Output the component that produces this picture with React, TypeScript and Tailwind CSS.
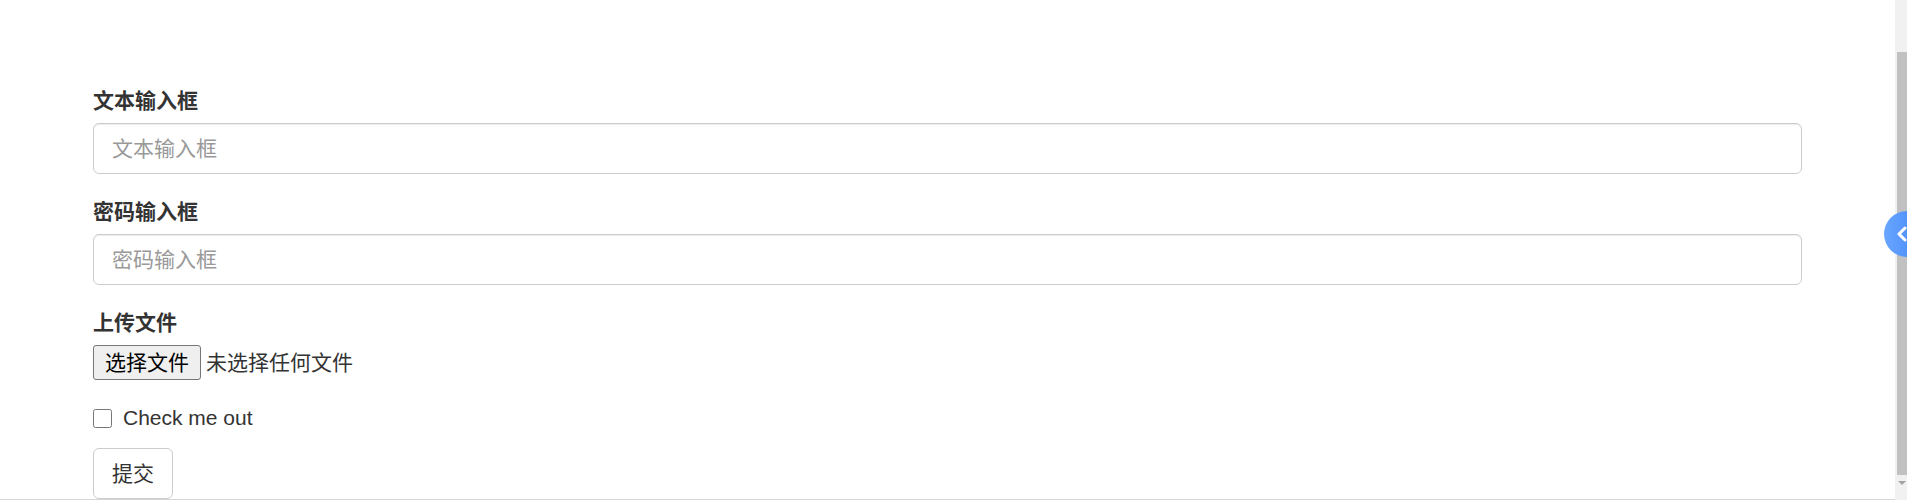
import React, { useState } from 'react';

const font = "font-['Liberation_Sans','Noto_Sans_CJK_SC',sans-serif]";

const App: React.FC = () => {
  const [checked, setChecked] = useState(false);

  return (
    <div className={`flex h-[500px] overflow-hidden bg-white text-[#333] ${font}`}>
      <main className="flex-1 px-[93px] pt-[86px]">
        <form onSubmit={(e) => e.preventDefault()}>
          <div className="mb-[23px]">
            <label className="block h-[30px] mb-[7px] text-[21px] leading-[30px] font-bold">文本输入框</label>
            <input
              type="text"
              placeholder="文本输入框"
              className="block w-full h-[51px] px-[18px] py-[9px] text-[21px] text-[#555] bg-white border border-[#ccc] rounded-[6px] shadow-[inset_0_1px_1px_rgba(0,0,0,0.075)] outline-none placeholder:text-[#999]"
            />
          </div>

          <div className="mb-[23px]">
            <label className="block h-[30px] mb-[7px] text-[21px] leading-[30px] font-bold">密码输入框</label>
            <input
              type="password"
              placeholder="密码输入框"
              className="block w-full h-[51px] px-[18px] py-[9px] text-[21px] text-[#555] bg-white border border-[#ccc] rounded-[6px] shadow-[inset_0_1px_1px_rgba(0,0,0,0.075)] outline-none placeholder:text-[#999]"
            />
          </div>

          <div className="mb-[23px]">
            <label className="block h-[30px] mb-[7px] text-[21px] leading-[30px] font-bold">上传文件</label>
            <div className="flex items-center gap-[5px] h-[35px]">
              <button
                type="button"
                className="h-[35px] px-[11px] text-[21px] leading-[27px] text-black bg-[#efefef] border border-[#767676] rounded-[3px]"
              >
                选择文件
              </button>
              <span className="text-[21px] text-[#333]">未选择任何文件</span>
            </div>
          </div>

          <label className="flex items-center gap-[11px] h-[30px] mb-[15px] text-[21px] leading-[30px] cursor-pointer">
            <input
              type="checkbox"
              checked={checked}
              onChange={(e) => setChecked(e.target.checked)}
              className="m-0 w-[19px] h-[19px]"
            />
            Check me out
          </label>

          <button
            type="submit"
            className="h-[51px] px-[18px] text-[21px] leading-[30px] text-[#333] bg-white border border-[#ccc] rounded-[6px]"
          >
            提交
          </button>
        </form>
      </main>

      <aside className="w-[12px] bg-[#f1f1f1]">
        <div className="ml-[2px] mt-[52px] h-[423px] bg-[#c1c1c1]"></div>
        <div className="ml-[3px] mt-[6px] w-0 h-0 border-l-[4px] border-r-[4px] border-t-[4px] border-l-transparent border-r-transparent border-t-[#a3a3a3]"></div>
      </aside>

      {/* floating side widget */}
      <div className="fixed left-[1884px] top-[211px] w-[46px] h-[46px] rounded-full bg-gradient-to-r from-[#6aa6ff] to-[#3d82f7] flex items-center pl-[12px]">
        <svg width="12" height="16" viewBox="0 0 12 16" fill="none">
          <path d="M9 2 L3 8 L9 14" stroke="white" strokeWidth="3" strokeLinecap="round" strokeLinejoin="round" />
        </svg>
      </div>

      <div className="fixed bottom-0 left-0 right-[12px] h-px bg-[#d6d6d6]"></div>
    </div>
  );
};

export default App;
